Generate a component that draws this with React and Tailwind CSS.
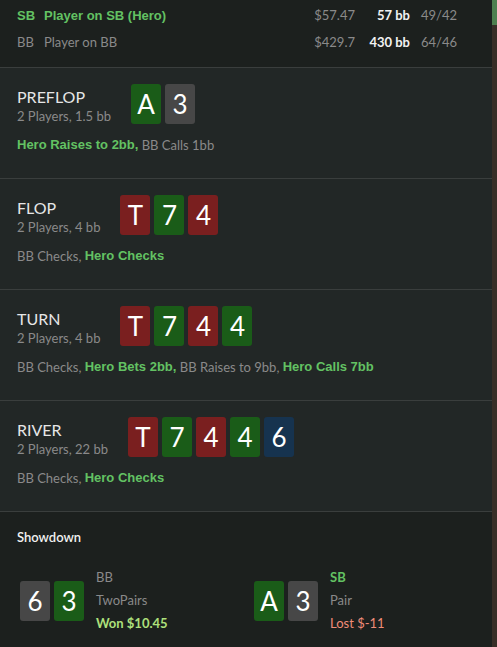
import React from 'react';

const FONT = { fontFamily: 'Lato, "Liberation Sans", sans-serif' };
const BOLD = 'font-["Liberation_Sans",sans-serif] font-bold text-[#63c263]';

const CARD_BG = {
  g: 'bg-[#1a5c18]',
  r: 'bg-[#7a1f1f]',
  x: 'bg-[#474747]',
  b: 'bg-[#16334f]',
};

const players = [
  { pos: 'SB', name: 'Player on SB (Hero)', money: '$57.47', bb: '57 bb', stats: '49/42', hero: true },
  { pos: 'BB', name: 'Player on BB', money: '$429.7', bb: '430 bb', stats: '64/46', hero: false },
];

const streets = [
  {
    name: 'PREFLOP',
    info: '2 Players, 1.5 bb',
    cards: [['A', 'g'], ['3', 'x']],
    actions: [['Hero Raises to 2bb,', true], [' BB Calls 1bb', false]],
  },
  {
    name: 'FLOP',
    info: '2 Players, 4 bb',
    cards: [['T', 'r'], ['7', 'g'], ['4', 'r']],
    actions: [['BB Checks, ', false], ['Hero Checks', true]],
  },
  {
    name: 'TURN',
    info: '2 Players, 4 bb',
    cards: [['T', 'r'], ['7', 'g'], ['4', 'r'], ['4', 'g']],
    actions: [
      ['BB Checks, ', false],
      ['Hero Bets 2bb,', true],
      [' BB Raises to 9bb, ', false],
      ['Hero Calls 7bb', true],
    ],
  },
  {
    name: 'RIVER',
    info: '2 Players, 22 bb',
    cards: [['T', 'r'], ['7', 'g'], ['4', 'r'], ['4', 'g'], ['6', 'b']],
    actions: [['BB Checks, ', false], ['Hero Checks', true]],
  },
];

const Card = ({ rank, suit }) => (
  <div
    className={`w-[30px] h-[40px] rounded-[3px] flex items-center justify-center text-white text-[26px] leading-none ${CARD_BG[suit]}`}
  >
    {rank}
  </div>
);

export default function App() {
  return (
    <div className="flex w-[497px] h-[647px] overflow-hidden text-[13px]" style={FONT}>
      <div className="w-[492px] flex flex-col bg-[#1c201e]">
        {/* Players */}
        <div className="pt-[2px] pb-[11px] border-b border-[#3a3e3d]">
          {players.map((p) => (
            <div key={p.pos} className="h-[27px] flex items-center pl-[17px]">
              <span className={`w-[27px] ${p.hero ? BOLD : 'text-[#8a8a8a]'}`}>{p.pos}</span>
              <span className={`flex-1 ${p.hero ? BOLD : 'text-[#8a8a8a]'}`}>{p.name}</span>
              <span className="w-[60px] text-right text-[#8a8a8a]">{p.money}</span>
              <span className="w-[55px] text-right text-[#f2f2f2] font-bold">{p.bb}</span>
              <span className="w-[82px] pl-[11px] text-[#8a8a8a]">{p.stats}</span>
            </div>
          ))}
        </div>

        {/* Streets */}
        {streets.map((s) => (
          <div key={s.name} className="h-[111px] shrink-0 bg-[#222726] border-b border-[#3a3e3d] pl-[17px] pt-4">
            <div className="flex items-start gap-5 h-[40px]">
              <div className="flex flex-col">
                <span className="text-[16px] leading-[22px] text-[#e6e6e6] mt-[2px]">{s.name}</span>
                <span className="leading-[16px] text-[#8a8a8a]">{s.info}</span>
              </div>
              <div className="flex gap-1">
                {s.cards.map(([r, su], i) => (
                  <Card key={i} rank={r} suit={su} />
                ))}
              </div>
            </div>
            <div className="mt-3 h-[18px] leading-[18px] flex items-center whitespace-pre">
              {s.actions.map(([t, hero], i) => (
                <span key={i} className={hero ? BOLD : 'text-[#8a8a8a]'}>
                  {t}
                </span>
              ))}
            </div>
          </div>
        ))}

        {/* Showdown */}
        <div className="flex-1 bg-[#1c201e]">
          <div className="pl-[17px] pt-4 leading-[18px] text-[#f0f0f0] font-semibold">Showdown</div>
          <div className="grid grid-cols-2 gap-4 px-5 mt-[20px]">
            <div className="flex items-center gap-3">
              <div className="flex gap-1">
                <Card rank="6" suit="x" />
                <Card rank="3" suit="g" />
              </div>
              <div className="flex flex-col leading-[23px]">
                <span className="text-[#8a8a8a]">BB</span>
                <span className="text-[#8a8a8a]">TwoPairs</span>
                <span className="text-[#aee07c] font-bold">Won $10.45</span>
              </div>
            </div>
            <div className="flex items-center gap-3">
              <div className="flex gap-1">
                <Card rank="A" suit="g" />
                <Card rank="3" suit="x" />
              </div>
              <div className="flex flex-col leading-[23px]">
                <span className="text-[#63c263] font-bold">SB</span>
                <span className="text-[#8a8a8a]">Pair</span>
                <span className="text-[#f08c78]">Lost $-11</span>
              </div>
            </div>
          </div>
        </div>
      </div>

      {/* Scrollbar */}
      <div className="w-[5px] bg-[#382e27]">
        <div className="h-[25px] bg-[#4e7f4f]" />
      </div>
    </div>
  );
}
